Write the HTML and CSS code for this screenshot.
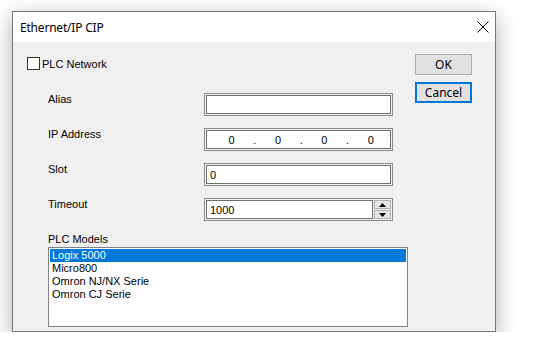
FILE: index.html
```html
<!DOCTYPE html>
<html>
<head>
<meta charset="utf-8">
<link rel="stylesheet" href="styles.css">
</head>
<body>
<div class="window">
  <div class="titlebar">
    <span class="title">Ethernet/IP CIP</span>
    <svg class="close" width="12" height="12" viewBox="0 0 12 12"><path d="M0.5 0.5 L11.5 11.5 M11.5 0.5 L0.5 11.5" stroke="#000" stroke-width="1" fill="none"/></svg>
  </div>
  <div class="content">
    <div class="left">
      <label class="check"><span class="box"></span><span>PLC Network</span></label>
      <div class="form">
        <div class="row"><span class="lbl">Alias</span><div class="field"><div class="inner"></div></div></div>
        <div class="row"><span class="lbl">IP Address</span><div class="field"><div class="inner ip"><span>0</span><span>.</span><span>0</span><span>.</span><span>0</span><span>.</span><span>0</span></div></div></div>
        <div class="row"><span class="lbl">Slot</span><div class="field"><div class="inner text">0</div></div></div>
        <div class="row"><span class="lbl">Timeout</span><div class="field"><div class="inner text">1000</div><div class="spin"><div class="sbtn"><svg width="7" height="4" viewBox="0 0 7 4"><path d="M3.5 0 L7 4 L0 4 Z" fill="#000"/></svg></div><div class="sbtn"><svg width="7" height="4" viewBox="0 0 7 4"><path d="M0 0 L7 0 L3.5 4 Z" fill="#000"/></svg></div></div></div></div>
        <div class="models">PLC Models</div>
        <div class="list">
          <div class="item sel">Logix 5000</div>
          <div class="item">Micro800</div>
          <div class="item">Omron NJ/NX Serie</div>
          <div class="item">Omron CJ Serie</div>
        </div>
      </div>
    </div>
    <div class="right">
      <div class="btn">OK</div>
      <div class="btn focus">Cancel</div>
    </div>
  </div>
</div>
</body>
</html>
```
FILE: styles.css
```css
* { box-sizing: border-box; }
body {
  margin: 0;
  background: #fff;
  font-family: "Liberation Sans", Arial, sans-serif;
  font-size: 11px;
  color: #000;
}
.window {
  margin: 11px 0 0 12px;
  width: 484px;
  height: 321px;
  border: 1px solid #777;
  background: #f0f0f0;
  box-shadow: 0 6px 20px rgba(0,0,0,0.32);
  display: flex;
  flex-direction: column;
}
.titlebar {
  height: 30px;
  background: #fff;
  display: flex;
  align-items: center;
  justify-content: space-between;
  padding: 0 6px 0 7px;
}
.title {
  font-family: "Noto Sans", "Open Sans", sans-serif;
  font-size: 12px;
  letter-spacing: -0.2px;
}
.content {
  flex: 1;
  display: flex;
}
.left {
  width: 402px;
  padding: 15px 0 0 14px;
}
.check {
  display: flex;
  align-items: center;
  height: 13px;
  gap: 2px;
}
.box {
  width: 13px;
  height: 13px;
  border: 1px solid #333;
  background: #fff;
}
.form {
  margin: 23px 0 0 21px;
  display: flex;
  flex-direction: column;
}
.row {
  display: flex;
  height: 23px;
  margin-bottom: 12px;
  align-items: flex-start;
}
.lbl {
  width: 156px;
  line-height: 13px;
}
.field {
  width: 189px;
  height: 23px;
  display: flex;
  border: 1px solid #8a8a8a;
  padding: 1px;
  background: #f3f3f3;
}
.inner {
  flex: 1;
  border: 1px solid #6f6f6f;
  background: #fff;
  display: flex;
  align-items: center;
}
.text { padding-left: 3px; }
.ip {
  display: grid;
  grid-template-columns: repeat(7, 23.2px);
  padding-left: 13px;
  justify-items: center;
}
.spin {
  width: 18px;
  display: flex;
  flex-direction: column;
  gap: 1px;
  padding: 0 0 0 1px;
}
.sbtn {
  flex: 1;
  background: #e6e6e6;
  border: 1px solid #b0b0b0;
  display: flex;
  align-items: center;
  justify-content: center;
}
.models {
  line-height: 13px;
  margin-bottom: 1px;
}
.list {
  width: 360px;
  height: 80px;
  border: 1px solid #828282;
  background: #fff;
  padding: 1px 1px;
}
.item {
  height: 13px;
  line-height: 13px;
  padding-left: 2px;
}
.item.sel {
  background: #0078d7;
  color: #fff;
}
.right {
  padding-top: 12px;
  display: flex;
  flex-direction: column;
  gap: 7px;
}
.btn {
  width: 57px;
  height: 21px;
  background: #e1e1e1;
  border: 1px solid #adadad;
  font-family: "Noto Sans", "Open Sans", sans-serif;
  font-size: 12px;
  display: flex;
  align-items: center;
  justify-content: center;
}
.btn.focus {
  border: 2px solid #0078d7;
}
```
